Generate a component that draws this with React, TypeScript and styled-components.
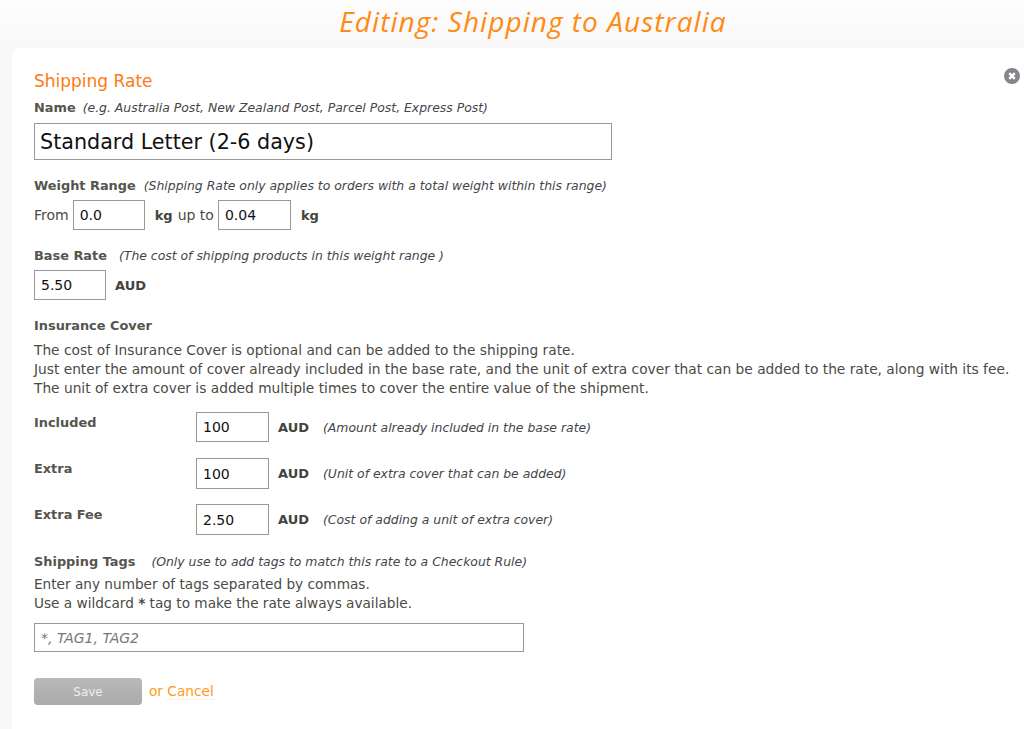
import React from 'react';
import styled, { createGlobalStyle } from 'styled-components';

const Global = createGlobalStyle`
  html, body { margin: 0; padding: 0; height: 100%; overflow: hidden; }
  body { background: #f9f9f9; font-family: "DejaVu Sans", sans-serif; color: #4a4a44; }
`;
const Page = styled.div`
  width: 1024px; height: 729px; overflow: hidden;
  display: flex; flex-direction: column;
  background: linear-gradient(#fdfdfd, #f8f8f8 48px);
`;
const Title = styled.h1`
  margin: 0; height: 48px; box-sizing: border-box; padding: 2px 0 0 42px;
  text-align: center; font: italic 400 28px/38px "Open Sans", sans-serif; letter-spacing: 1.05px; color: #ff8a14;
`;
const Card = styled.form`
  position: relative; flex: 1; margin-left: 12px; padding: 23px 0 0 22px;
  background: #fff; border-radius: 8px 0 0 0;
`;
const Close = styled.svg`
  position: absolute; right: 4px; top: 20px; width: 16px; height: 16px;
`;
const Heading = styled.h2`
  margin: 0; font: 400 17px/20px "DejaVu Sans", sans-serif; color: #ff7a10;
`;
const LabelRow = styled.div<{ $top?: number; $gap?: number }>`
  display: flex; align-items: baseline; gap: ${p => p.$gap ?? 8}px;
  margin-top: ${p => p.$top ?? 0}px; height: 18px; line-height: 18px;
`;
const Label = styled.label`
  font-size: 12.9px; font-weight: 700; color: #55554e;
`;
const Hint = styled.em`
  font-size: 12.42px; color: #44444a;
`;
const Input = styled.input<{ $w: number; $h?: number; $fs?: number; $pad?: number }>`
  box-sizing: border-box; width: ${p => p.$w}px; height: ${p => p.$h ?? 30}px;
  border: 1px solid #999; border-radius: 0; background: #fff; outline: none;
  padding: 0 ${p => p.$pad ?? 6}px; margin: 0; color: #111;
  font: ${p => p.$fs ?? 14}px "DejaVu Sans", sans-serif;
  &::placeholder { color: #777; font-style: italic; opacity: 1; }
`;
const Row = styled.div<{ $top?: number }>`
  display: flex; align-items: center; font-size: 14px; margin-top: ${p => p.$top ?? 0}px;
`;
const Text = styled.span<{ $l?: number; $r?: number }>`
  margin-left: ${p => p.$l ?? 0}px; margin-right: ${p => p.$r ?? 0}px; white-space: nowrap;
`;
const Unit = styled.strong<{ $l?: number; $r?: number }>`
  font-size: 13px; margin-left: ${p => p.$l ?? 0}px; margin-right: ${p => p.$r ?? 0}px; color: #44443e;
`;
const Para = styled.p<{ $top?: number; $fs?: number }>`
  margin: ${p => p.$top ?? 0}px 0 0; font-size: ${p => p.$fs ?? 13.75}px; line-height: 19px; white-space: nowrap; color: #4a4a44;
`;
const CoverRow = styled.div<{ $top: number }>`
  display: grid; grid-template-columns: 162px 73px auto auto; justify-content: start; align-items: start;
  margin-top: ${p => p.$top}px; height: 30px;
`;
const CoverLabel = styled(Label)` line-height: 22px; `;
const CoverUnit = styled(Unit)` line-height: 32px; margin-left: 9px; `;
const CoverHint = styled(Hint)` line-height: 32px; margin-left: 14px; `;
const Actions = styled.div`
  display: flex; align-items: center; margin-top: 26px;
`;
const Save = styled.button`
  width: 108px; height: 27px; border: 0; border-radius: 4px; padding: 0;
  background: linear-gradient(#b9b9b9, #aaaaaa); color: #eee;
  font: 12px "DejaVu Sans", sans-serif;
`;
const Or = styled.span`
  margin: 0 0 2px 7px; font-size: 13.7px; color: #ff9a1a;
`;
const Cancel = styled.a`
  color: #ff9a1a; border-bottom: 1px dotted #ffe2b8;
`;

export default function App() {
  return (
    <Page>
      <Global />
      <Title>Editing: Shipping to Australia</Title>
      <Card>
        <Close viewBox="0 0 16 16">
          <circle cx="8" cy="8" r="8" fill="#83868a" />
          <path d="M5.2 5.2l5.6 5.6M10.8 5.2l-5.6 5.6" stroke="#fff" strokeWidth="2.4" />
        </Close>
        <Heading>Shipping Rate</Heading>
        <LabelRow $top={8} $gap={7}>
          <Label>Name</Label>
          <Hint>(e.g. Australia Post, New Zealand Post, Parcel Post, Express Post)</Hint>
        </LabelRow>
        <Row $top={6}>
          <Input $w={578} $h={37} $fs={20.7} $pad={5} defaultValue="Standard Letter (2-6 days)" />
        </Row>
        <LabelRow $top={17}>
          <Label>Weight Range</Label>
          <Hint>(Shipping Rate only applies to orders with a total weight within this range)</Hint>
        </LabelRow>
        <Row $top={5}>
          <Text $r={4}>From</Text>
          <Input $w={72} defaultValue="0.0" />
          <Unit $l={10}>kg</Unit>
          <Text $l={5} $r={4}>up to</Text>
          <Input $w={73} defaultValue="0.04" />
          <Unit $l={10}>kg</Unit>
        </Row>
        <LabelRow $top={17} $gap={12}>
          <Label>Base Rate</Label>
          <Hint>(The cost of shipping products in this weight range )</Hint>
        </LabelRow>
        <Row $top={5}>
          <Input $w={72} defaultValue="5.50" />
          <Unit $l={9}>AUD</Unit>
        </Row>
        <LabelRow $top={17}>
          <Label>Insurance Cover</Label>
        </LabelRow>
        <Para $top={6}>
          The cost of Insurance Cover is optional and can be added to the shipping rate.<br />
          Just enter the amount of cover already included in the base rate, and the unit of extra cover that can be added to the rate, along with its fee.<br />
          The unit of extra cover is added multiple times to cover the entire value of the shipment.
        </Para>
        <CoverRow $top={14}>
          <CoverLabel>Included</CoverLabel>
          <Input $w={73} defaultValue="100" />
          <CoverUnit>AUD</CoverUnit>
          <CoverHint>(Amount already included in the base rate)</CoverHint>
        </CoverRow>
        <CoverRow $top={16}>
          <CoverLabel>Extra</CoverLabel>
          <Input $w={73} $h={31} defaultValue="100" />
          <CoverUnit>AUD</CoverUnit>
          <CoverHint>(Unit of extra cover that can be added)</CoverHint>
        </CoverRow>
        <CoverRow $top={16}>
          <CoverLabel>Extra Fee</CoverLabel>
          <Input $w={73} $h={31} defaultValue="2.50" />
          <CoverUnit>AUD</CoverUnit>
          <CoverHint>(Cost of adding a unit of extra cover)</CoverHint>
        </CoverRow>
        <LabelRow $top={19} $gap={16}>
          <Label>Shipping Tags</Label>
          <Hint>(Only use to add tags to match this rate to a Checkout Rule)</Hint>
        </LabelRow>
        <Para $top={4} $fs={13.65}>
          Enter any number of tags separated by commas.<br />
          Use a wildcard <b>*</b> tag to make the rate always available.
        </Para>
        <Row $top={10}>
          <Input $w={490} $h={29} placeholder="*, TAG1, TAG2" />
        </Row>
        <Actions>
          <Save type="button">Save</Save>
          <Or>or <Cancel>Cancel</Cancel></Or>
        </Actions>
      </Card>
    </Page>
  );
}
